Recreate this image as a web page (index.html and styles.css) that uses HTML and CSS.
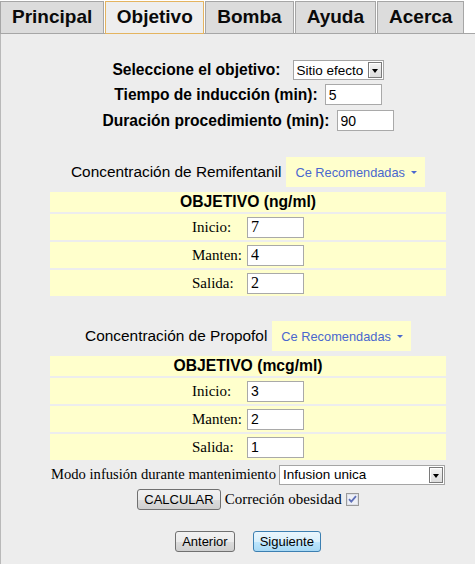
FILE: index.html
```html
<!DOCTYPE html>
<html lang="es">
<head>
<meta charset="utf-8">
<title>Objetivo</title>
<link rel="stylesheet" href="styles.css">
</head>
<body>
<nav class="tabs">
  <a class="tab">Principal</a>
  <a class="tab active">Objetivo</a>
  <a class="tab">Bomba</a>
  <a class="tab">Ayuda</a>
  <a class="tab">Acerca</a>
</nav>
<div class="panel">
  <form class="main">
    <div class="settings">
      <div class="row">
        <label class="blabel">Seleccione el objetivo:</label>
        <span class="select sel-obj"><select><option>Sitio efecto</option></select><span class="arrow"></span></span>
      </div>
      <div class="row">
        <label class="blabel">Tiempo de inducción (min):</label>
        <input class="txt sans" type="text" value="5">
      </div>
      <div class="row row-last">
        <label class="blabel">Duración procedimiento (min):</label>
        <input class="txt sans" type="text" value="90">
      </div>
    </div>

    <div class="drug-head first">
      <span class="drug-name">Concentración de Remifentanil</span>
      <span class="recom">Ce Recomendadas<span class="caret"></span></span>
    </div>
    <table class="target">
      <tr><th>OBJETIVO (ng/ml)</th></tr>
      <tr><td><div class="cell"><span class="lab">Inicio:</span><input class="txt serif" type="text" value="7"></div></td></tr>
      <tr><td><div class="cell"><span class="lab">Manten:</span><input class="txt serif" type="text" value="4"></div></td></tr>
      <tr><td><div class="cell"><span class="lab">Salida:</span><input class="txt serif" type="text" value="2"></div></td></tr>
    </table>

    <div class="drug-head second">
      <span class="drug-name">Concentración de Propofol</span>
      <span class="recom">Ce Recomendadas<span class="caret"></span></span>
    </div>
    <table class="target">
      <tr><th>OBJETIVO (mcg/ml)</th></tr>
      <tr><td><div class="cell"><span class="lab">Inicio:</span><input class="txt sans" type="text" value="3"></div></td></tr>
      <tr><td><div class="cell"><span class="lab">Manten:</span><input class="txt sans" type="text" value="2"></div></td></tr>
      <tr><td><div class="cell"><span class="lab">Salida:</span><input class="txt sans" type="text" value="1"></div></td></tr>
    </table>

    <div class="modo">
      <span class="nowrap">Modo infusión durante mantenimiento</span>
      <span class="select sel-modo"><select><option>Infusion unica</option></select><span class="arrow"></span></span>
    </div>
    <div class="calc">
      <button type="button" class="btn">CALCULAR</button>
      <span class="nowrap">Correción obesidad</span>
      <svg class="chk" width="13" height="13" viewBox="0 0 13 13"><rect x="0.5" y="0.5" width="12" height="12" fill="#eef0f6" stroke="#9a9a9a"/><rect x="1.5" y="1.5" width="10" height="10" fill="none" stroke="#dde0e8"/><path d="M3 6.2 L5.3 8.6 L10 3.2" fill="none" stroke="#5f70b8" stroke-width="1.8"/></svg>
    </div>
    <div class="nav">
      <button type="button" class="btn">Anterior</button>
      <button type="button" class="btn btn-focus">Siguiente</button>
    </div>
  </form>
</div>
</body>
</html>
```
FILE: styles.css
```css
html, body {
  margin: 0;
  padding: 0;
  background: #ffffff;
}
body {
  font-family: "Liberation Sans", Arial, sans-serif;
  color: #000;
  height: 564px;
  display: flex;
  flex-direction: column;
  overflow: hidden;
}

.tabs {
  display: flex;
  align-items: flex-start;
  gap: 1px;
  padding-top: 1px;
  border-bottom: 1px solid #a6a6a6;
  flex: none;
}
.tab {
  box-sizing: border-box;
  height: 32px;
  line-height: 30px;
  padding: 0 11px;
  border: 1px solid #a6a6a6;
  border-bottom: 0;
  background: #dcdcdc;
  font-size: 19px;
  font-weight: bold;
  color: #0a0a0a;
}
.tab.active {
  height: 33px;
  margin-bottom: -1px;
  border: 1px solid #e4b460;
  background: #eeeeee;
  padding: 0 10.5px;
}

.panel {
  flex: 1;
  background: #ededed;
  border-left: 1px solid #b9b9b9;
}
.main {
  width: 400px;
  margin-left: 47px;
}
.nowrap {
  white-space: nowrap;
  flex: none;
}

.settings {
  display: flex;
  flex-direction: column;
  gap: 4px;
  padding-top: 26px;
}
.row {
  display: flex;
  justify-content: center;
  align-items: center;
  gap: 7px;
  height: 21px;
}
.row:first-child { height: 20px; }
.row-last { margin-top: 1px; }
.blabel {
  font-size: 15.6px;
  font-weight: bold;
  white-space: nowrap;
}

.txt {
  box-sizing: border-box;
  width: 57px;
  height: 21px;
  margin: 0;
  border: 1px solid #a9a9a9;
  background: #fff;
  padding: 0 3px;
  color: #000;
  outline: none;
  flex: none;
}
.txt.sans {
  font-family: "Liberation Sans", Arial, sans-serif;
  font-size: 14px;
}
.txt.serif {
  font-family: "Liberation Serif", "Times New Roman", serif;
  font-size: 16px;
}

.select {
  position: relative;
  display: inline-block;
  height: 20px;
  flex: none;
}
.select select {
  -webkit-appearance: none;
  appearance: none;
  box-sizing: border-box;
  height: 20px;
  margin: 0;
  border: 1px solid #a5a5a5;
  border-radius: 0;
  background: #fff;
  padding: 0 0 0 3px;
  font-family: "Liberation Sans", Arial, sans-serif;
  font-size: 13.5px;
  color: #000;
  outline: none;
  display: block;
}
.sel-obj { margin-left: 5px; }
.sel-obj select { width: 91px; }
.sel-modo select { width: 166px; }
.arrow {
  position: absolute;
  top: 2px;
  right: 2px;
  box-sizing: border-box;
  width: 14px;
  height: 16px;
  border: 1px solid #7a7a7a;
  background: linear-gradient(#f4f4f4, #dcdcdc);
  box-shadow: inset 1px 1px 0 #ffffff;
}
.arrow::after {
  content: "";
  position: absolute;
  left: 3px;
  top: 6px;
  border-left: 3.5px solid transparent;
  border-right: 3.5px solid transparent;
  border-top: 4px solid #000;
}

.drug-head {
  display: flex;
  justify-content: center;
  align-items: center;
  gap: 5px;
  height: 30px;
}
.drug-head.first { margin-top: 26px; }
.drug-head.second { margin-top: 23px; }
.drug-name {
  font-size: 15.4px;
  white-space: nowrap;
}
.recom {
  display: inline-flex;
  align-items: center;
  height: 30px;
  padding: 0 8px 0 9px;
  background: #ffffcc;
  color: #4a67cf;
  font-size: 12.8px;
  white-space: nowrap;
}
.caret {
  display: inline-block;
  margin-left: 6px;
  border-left: 3px solid transparent;
  border-right: 3px solid transparent;
  border-top: 3px solid #4a67cf;
}

.target {
  width: 400px;
  margin-top: 3px;
  border-collapse: separate;
  border-spacing: 2px;
}
.target th {
  height: 20px;
  padding: 0;
  background: #ffffcc;
  font-size: 15.7px;
  font-weight: bold;
  text-align: center;
}
.target td {
  height: 26px;
  padding: 0;
  background: #ffffcc;
}
.cell {
  display: flex;
  justify-content: center;
  align-items: center;
}
.lab {
  width: 55px;
  font-family: "Liberation Serif", "Times New Roman", serif;
  font-size: 15px;
}

.modo {
  display: flex;
  justify-content: center;
  align-items: center;
  gap: 3px;
  margin-top: 2px;
  height: 21px;
  font-family: "Liberation Serif", "Times New Roman", serif;
  font-size: 14.6px;
}
.calc {
  display: flex;
  justify-content: center;
  align-items: center;
  gap: 4px;
  margin-top: 4px;
  height: 21px;
  font-family: "Liberation Serif", "Times New Roman", serif;
  font-size: 15px;
}
.nav {
  display: flex;
  justify-content: center;
  gap: 18px;
  margin-top: 21px;
}

.btn {
  box-sizing: border-box;
  height: 21px;
  margin: 0;
  padding: 0 6px;
  border: 1px solid #707070;
  border-radius: 3px;
  background: linear-gradient(#f2f2f2 0%, #ebebeb 50%, #dddddd 51%, #cfcfcf 100%);
  font-family: "Liberation Sans", Arial, sans-serif;
  font-size: 13px;
  color: #000;
  flex: none;
}
.btn-focus {
  border-color: #3c7fb1;
  background: linear-gradient(#eaf6fd 0%, #d9f0fc 50%, #bee6fd 51%, #a7d9f5 100%);
}
.chk {
  display: block;
  flex: none;
}
```
